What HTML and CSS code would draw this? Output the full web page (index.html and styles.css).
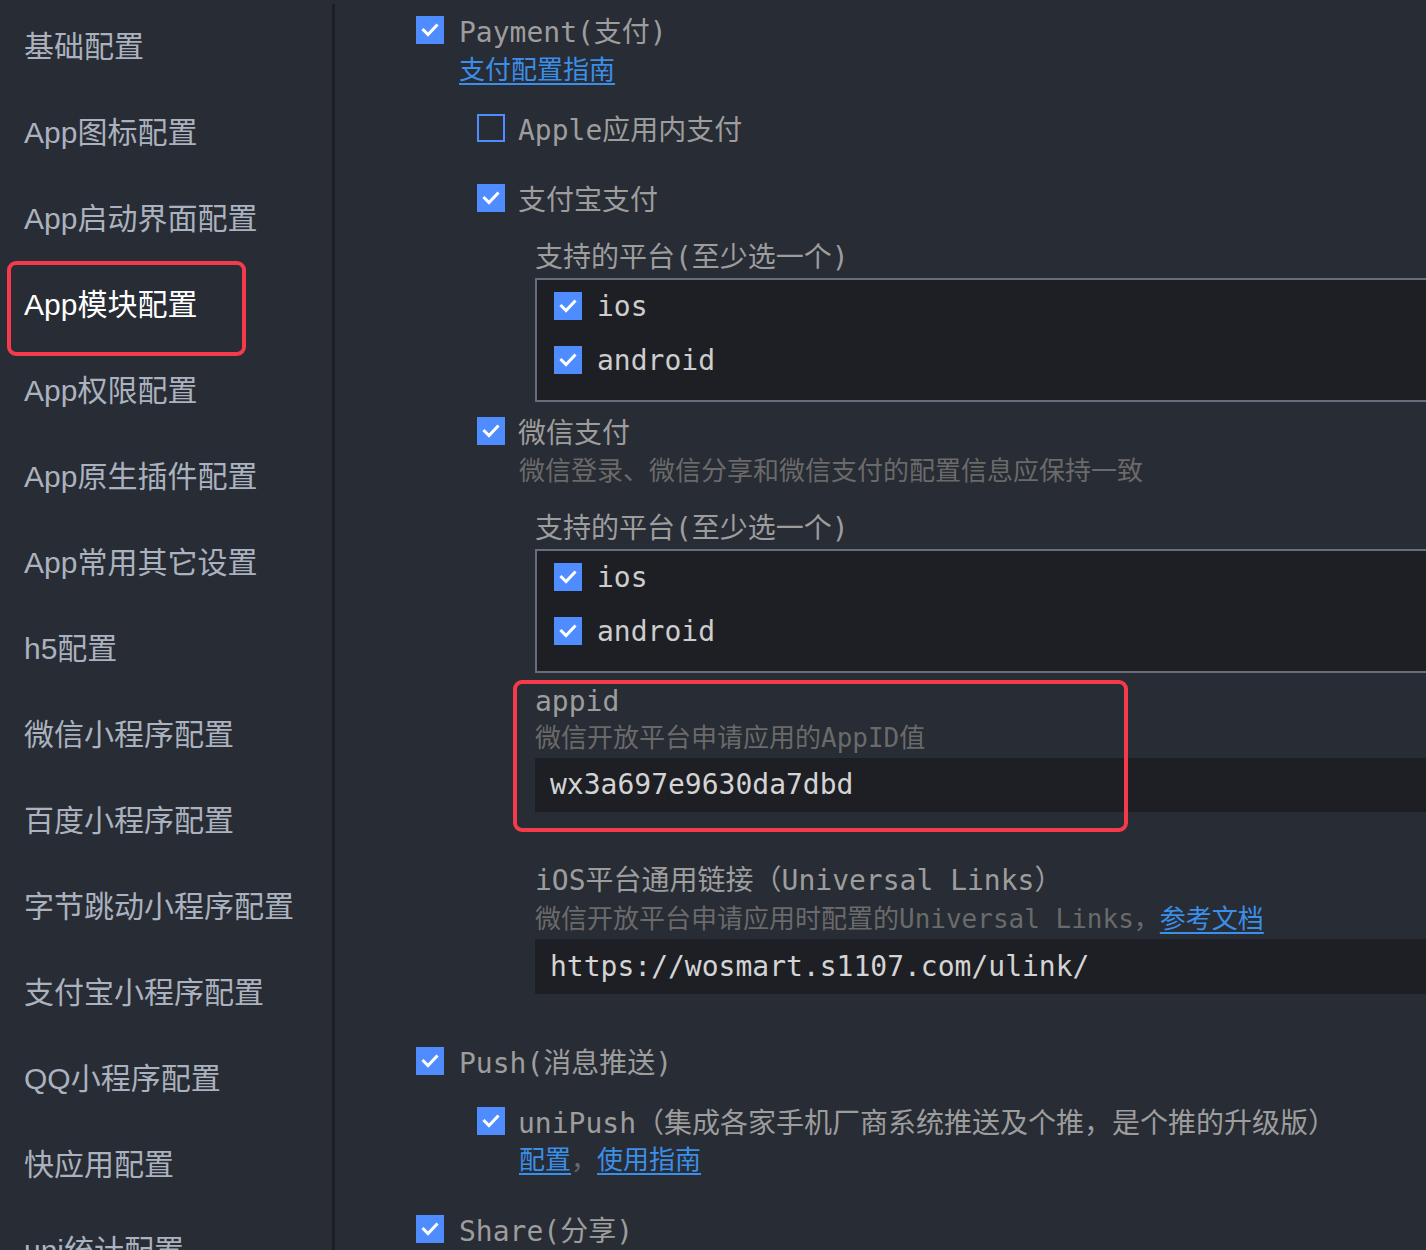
FILE: index.html
```html
<!DOCTYPE html>
<html lang="zh-CN">
<head>
  <meta charset="UTF-8" />
  <title>manifest.json - App模块配置</title>
  <link rel="stylesheet" href="styles.css">
</head>
<body>
  <div class="layout">
    <nav class="sidebar">
      <div class="nav-item">基础配置</div>
      <div class="nav-item">App图标配置</div>
      <div class="nav-item">App启动界面配置</div>
      <div class="nav-item active">App模块配置</div>
      <div class="nav-item">App权限配置</div>
      <div class="nav-item">App原生插件配置</div>
      <div class="nav-item">App常用其它设置</div>
      <div class="nav-item">h5配置</div>
      <div class="nav-item">微信小程序配置</div>
      <div class="nav-item">百度小程序配置</div>
      <div class="nav-item">字节跳动小程序配置</div>
      <div class="nav-item">支付宝小程序配置</div>
      <div class="nav-item">QQ小程序配置</div>
      <div class="nav-item">快应用配置</div>
      <div class="nav-item">uni统计配置</div>
    </nav>

    <main class="content">
      <div class="opt">
        <span class="cb"><svg viewBox="0 0 28 28"><polyline points="7.5,14 12,18.5 20.5,9.5" /></svg></span>
        <span>Payment(支付)</span>
      </div>
      <div class="links guide"><a href="#">支付配置指南</a></div>

      <div class="sub">
        <div class="opt apple">
          <span class="cb off"></span>
          <span>Apple应用内支付</span>
        </div>
        <div class="opt alipay">
          <span class="cb"><svg viewBox="0 0 28 28"><polyline points="7.5,14 12,18.5 20.5,9.5" /></svg></span>
          <span>支付宝支付</span>
        </div>
        <div class="field">
          <div class="field-label">支持的平台(至少选一个)</div>
          <div class="platforms">
            <div class="opt">
              <span class="cb"><svg viewBox="0 0 28 28"><polyline points="7.5,14 12,18.5 20.5,9.5" /></svg></span>
              <span>ios</span>
            </div>
            <div class="opt">
              <span class="cb"><svg viewBox="0 0 28 28"><polyline points="7.5,14 12,18.5 20.5,9.5" /></svg></span>
              <span>android</span>
            </div>
          </div>
        </div>

        <div class="opt wechat">
          <span class="cb"><svg viewBox="0 0 28 28"><polyline points="7.5,14 12,18.5 20.5,9.5" /></svg></span>
          <span>微信支付</span>
        </div>
        <div class="desc indent wechat-desc">微信登录、微信分享和微信支付的配置信息应保持一致</div>
        <div class="field">
          <div class="field-label">支持的平台(至少选一个)</div>
          <div class="platforms">
            <div class="opt">
              <span class="cb"><svg viewBox="0 0 28 28"><polyline points="7.5,14 12,18.5 20.5,9.5" /></svg></span>
              <span>ios</span>
            </div>
            <div class="opt">
              <span class="cb"><svg viewBox="0 0 28 28"><polyline points="7.5,14 12,18.5 20.5,9.5" /></svg></span>
              <span>android</span>
            </div>
          </div>
        </div>

        <div class="field appid">
          <div class="field-name">appid</div>
          <div class="desc">微信开放平台申请应用的AppID值</div>
          <div class="input">wx3a697e9630da7dbd</div>
        </div>

        <div class="field ulink">
          <div class="field-label">iOS平台通用链接（Universal Links）</div>
          <div class="desc">微信开放平台申请应用时配置的Universal Links，<a href="#">参考文档</a></div>
          <div class="input">https://wosmart.s1107.com/ulink/</div>
        </div>
      </div>

      <div class="opt push">
        <span class="cb"><svg viewBox="0 0 28 28"><polyline points="7.5,14 12,18.5 20.5,9.5" /></svg></span>
        <span>Push(消息推送)</span>
      </div>
      <div class="sub">
        <div class="opt unipush">
          <span class="cb"><svg viewBox="0 0 28 28"><polyline points="7.5,14 12,18.5 20.5,9.5" /></svg></span>
          <span>uniPush（集成各家手机厂商系统推送及个推，是个推的升级版）</span>
        </div>
        <div class="links indent"><a href="#">配置</a><span class="sep">，</span><a href="#">使用指南</a></div>
      </div>

      <div class="opt share">
        <span class="cb"><svg viewBox="0 0 28 28"><polyline points="7.5,14 12,18.5 20.5,9.5" /></svg></span>
        <span>Share(分享)</span>
      </div>
    </main>
  </div>
</body>
</html>
```

FILE: styles.css
```css
html, body {
  margin: 0;
  padding: 0;
  background: #282c34;
  height: 100%;
  overflow: hidden;
}

.layout {
  display: flex;
  height: 100vh;
}

/* left menu */
.sidebar {
  width: 332px;
  flex: none;
  margin-top: 4px;
  border-right: 3px solid #1c1e23;
  font-family: "Liberation Sans", "Noto Sans CJK SC", sans-serif;
  font-size: 30px;
  color: #abb2bf;
}

.nav-item {
  position: relative;
  height: 86px;
  line-height: 86px;
  padding-left: 24px;
  white-space: nowrap;
}

.nav-item.active {
  color: #ffffff;
}

.nav-item.active::after {
  content: "";
  position: absolute;
  top: -1px;
  left: 7px;
  width: 239px;
  height: 95px;
  box-sizing: border-box;
  border: 4px solid #f53b4b;
  border-radius: 9px;
}

/* settings */
.content {
  flex: 1;
  min-width: 0;
  padding: 10px 0 0 81px;
  font-family: "DejaVu Sans Mono", "Noto Sans CJK SC", monospace;
  font-size: 28px;
  color: #9d9d9d;
  overflow: hidden;
}

.opt {
  display: flex;
  align-items: center;
  gap: 15px;
  height: 40px;
  white-space: nowrap;
}

.sub .opt {
  gap: 13px;
}

.cb {
  width: 28px;
  height: 28px;
  flex: none;
  background: #4f8cff;
  box-sizing: border-box;
}

.cb svg {
  display: block;
  width: 28px;
  height: 28px;
}

.cb polyline {
  fill: none;
  stroke: #ffffff;
  stroke-width: 3;
  stroke-linecap: square;
}

.cb.off {
  background: transparent;
  border: 2px solid #4f8cff;
}

a {
  color: #3b8fe8;
  text-decoration: underline;
  text-underline-offset: 4px;
}

.links {
  font-size: 26px;
  line-height: 38px;
}

.links .sep {
  color: #6a6a6a;
}

.guide {
  margin-left: 43px;
  margin-top: 1px;
}

.sub {
  margin-left: 61px;
}

.indent {
  margin-left: 42px;
}

.apple {
  margin-top: 19px;
}

.alipay {
  margin-top: 30px;
}

.field {
  margin-left: 58px;
}

.field-label {
  margin-top: 20px;
  line-height: 40px;
  white-space: nowrap;
}

.platforms {
  background: #1e1f24;
  border: 2px solid #666d7d;
  border-right: none;
  padding: 6px 0 20px 17px;
  display: flex;
  flex-direction: column;
  gap: 14px;
}

.sub .platforms .opt {
  gap: 15px;
  color: #cdcdcd;
}

.wechat {
  margin-top: 9px;
}

.desc {
  font-size: 26px;
  line-height: 36px;
  color: #6a6a6a;
  white-space: nowrap;
}

.wechat-desc {
  margin-top: 2px;
}

.desc a {
  font-size: 26px;
}

.field-name {
  line-height: 36px;
}

.input {
  margin-top: 2px;
  height: 54px;
  line-height: 54px;
  padding-left: 15px;
  background: #1e1f24;
  color: #d4d4d4;
  white-space: nowrap;
}

.appid {
  position: relative;
  margin-top: 11px;
}

.appid::after {
  content: "";
  position: absolute;
  top: -4px;
  left: -22px;
  width: 615px;
  height: 152px;
  box-sizing: border-box;
  border: 4px solid #f53b4b;
  border-radius: 9px;
}

.ulink {
  margin-top: 49px;
}

.ulink .field-label {
  margin-top: 0;
}

.ulink .input {
  height: 55px;
  line-height: 55px;
}

.push {
  margin-top: 47px;
}

.unipush {
  margin-top: 20px;
}

.share {
  margin-top: 30px;
}
```
